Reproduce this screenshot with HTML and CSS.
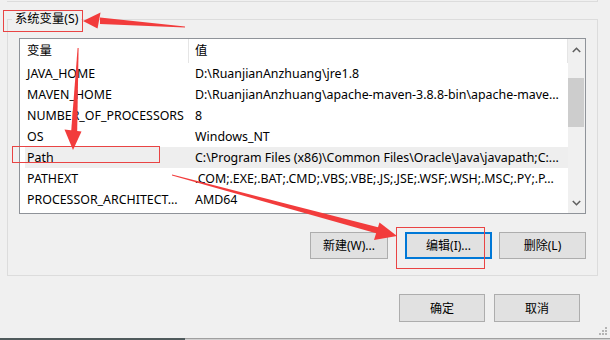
FILE: index.html
```html
<!DOCTYPE html>
<html lang="zh-CN">
<head>
<meta charset="utf-8">
<title>系统变量</title>
<link rel="stylesheet" href="styles.css">
</head>
<body>
<div class="page">
  <div class="prev"></div>
  <div class="group">
    <span class="legend">系统变量(S)</span>
    <div class="list">
      <div class="list-main">
        <div class="head">
          <div class="hc c1">变量</div>
          <div class="hc c2">值</div>
        </div>
        <div class="row"><span class="c1">JAVA_HOME</span><span class="c2">D:\RuanjianAnzhuang\jre1.8</span></div>
        <div class="row"><span class="c1">MAVEN_HOME</span><span class="c2">D:\RuanjianAnzhuang\apache-maven-3.8.8-bin\apache-mave...</span></div>
        <div class="row"><span class="c1">NUMBER_OF_PROCESSORS</span><span class="c2">8</span></div>
        <div class="row"><span class="c1">OS</span><span class="c2">Windows_NT</span></div>
        <div class="row sel"><span class="c1">Path</span><span class="c2">C:\Program Files (x86)\Common Files\Oracle\Java\javapath;C:...</span></div>
        <div class="row"><span class="c1">PATHEXT</span><span class="c2">.COM;.EXE;.BAT;.CMD;.VBS;.VBE;.JS;.JSE;.WSF;.WSH;.MSC;.PY;.P...</span></div>
        <div class="row"><span class="c1">PROCESSOR_ARCHITECT...</span><span class="c2">AMD64</span></div>
      </div>
      <div class="scroll">
        <div class="sb-btn">
          <svg width="9" height="6" viewBox="0 0 9 6"><path d="M0.8 5 L4.5 1.3 L8.2 5" fill="none" stroke="#606060" stroke-width="1.6"/></svg>
        </div>
        <div class="sb-track"><div class="sb-thumb"></div></div>
        <div class="sb-btn">
          <svg width="9" height="6" viewBox="0 0 9 6"><path d="M0.8 1 L4.5 4.7 L8.2 1" fill="none" stroke="#606060" stroke-width="1.6"/></svg>
        </div>
      </div>
    </div>
    <div class="btns">
      <button class="btn w78">新建(W)...</button>
      <button class="btn focus gap17">编辑(I)...</button>
      <button class="btn gap7">删除(L)</button>
    </div>
  </div>
  <div class="footer">
    <button class="btn tall">确定</button>
    <button class="btn tall">取消</button>
  </div>
  <div class="strip"><div class="strip-dark"></div><div class="strip-light"></div></div>

  <svg class="grip" width="9" height="9" viewBox="0 0 9 9">
    <rect x="6" y="0" width="2" height="2" fill="#b4b4b4"/>
    <rect x="3" y="3" width="2" height="2" fill="#b4b4b4"/>
    <rect x="6" y="3" width="2" height="2" fill="#b4b4b4"/>
    <rect x="0" y="6" width="2" height="2" fill="#b4b4b4"/>
    <rect x="3" y="6" width="2" height="2" fill="#b4b4b4"/>
    <rect x="6" y="6" width="2" height="2" fill="#b4b4b4"/>
  </svg>

  <svg class="marks" width="610" height="340" viewBox="0 0 610 340">
    <g fill="none" stroke="#e94444" stroke-width="1">
      <rect x="3.5" y="10.5" width="79" height="21"/>
      <rect x="12.5" y="146.5" width="147" height="16"/>
      <rect x="396.5" y="227.5" width="88" height="41"/>
    </g>
    <g fill="#f23c3c">
      <polygon points="100,17.5 100,24 185,27.6 185,26.6"/>
      <polygon points="83,21 100.5,12.5 97.5,28.5"/>
      <polygon points="77.6,48 78.6,48 77.2,131 71.2,131"/>
      <polygon points="64.5,129.5 81.5,131.5 73,150"/>
      <polygon points="172,174.6 172,175.6 377,233.6 379,227.4"/>
      <polygon points="397,236 379.5,222.5 374,240"/>
    </g>
  </svg>
</div>
</body>
</html>
```
FILE: styles.css
```css
* { box-sizing: border-box; }
html, body { margin: 0; padding: 0; }
body {
  background: #f0f0f0;
  font-family: "Noto Sans", "Noto Sans CJK SC", sans-serif;
  font-size: 12px;
  color: #000;
}
.page {
  position: relative;
  width: 610px;
  height: 340px;
  overflow: hidden;
  background: #f0f0f0;
  display: flex;
  flex-direction: column;
}
.prev {
  margin-left: 7px;
  width: 591px;
  height: 2px;
  border-right: 1px solid #dcdcdc;
  border-bottom: 1px solid #dcdcdc;
}
.group {
  position: relative;
  margin-top: 17px;
  margin-left: 7px;
  width: 591px;
  height: 257px;
  border: 1px solid #dcdcdc;
  padding: 18px 11px 0 11px;
}
.legend {
  position: absolute;
  left: 4px;
  top: -10px;
  padding: 0 3px;
  background: #f0f0f0;
  line-height: 18px;
  font-size: 12.3px;
}
.list {
  width: 567px;
  height: 176px;
  border: 1px solid #8f9399;
  background: #fff;
  display: flex;
  overflow: hidden;
}
.list-main {
  width: 548px;
  overflow: hidden;
  font-size: 12.4px;
}
.head {
  display: flex;
  height: 24px;
}
.hc {
  line-height: 24px;
  border-right: 1px solid #e5e5e5;
  white-space: nowrap;
}
.hc.c1 { width: 169px; padding-left: 7px; }
.hc.c2 { width: 379px; padding-left: 6px; }
.row {
  display: flex;
  height: 21px;
  line-height: 21px;
  margin-left: 5px;
  width: 543px;
  white-space: nowrap;
}
.row.sel { background: #eeeeee; }
.row .c1 {
  width: 163px;
  padding-left: 2px;
  padding-right: 2px;
  overflow: hidden;
  text-overflow: ellipsis;
}
.row .c2 {
  width: 380px;
  padding-left: 7px;
  padding-right: 2px;
  overflow: hidden;
  text-overflow: ellipsis;
}
.scroll {
  width: 17px;
  display: flex;
  flex-direction: column;
  background: #f0f0f0;
}
.sb-btn {
  height: 21px;
  display: flex;
  align-items: center;
  justify-content: center;
  flex: none;
}
.sb-track {
  flex: 1;
  padding-top: 18px;
}
.sb-thumb {
  width: 16px;
  height: 49px;
  background: #cdcdcd;
}
.btns {
  margin-top: 18px;
  display: flex;
  justify-content: flex-end;
}
.btn {
  font-family: "Noto Sans", "Noto Sans CJK SC", sans-serif;
  font-size: 12px;
  color: #000;
  width: 87px;
  height: 27px;
  background: #e1e1e1;
  border: 1px solid #adadad;
  padding: 0;
  margin: 0;
  line-height: 23px;
}
.btn.w78 { width: 78px; }
.btn.focus { border: 2px solid #0078d7; }
.btn.gap17 { margin-left: 17px; }
.btn.gap7 { margin-left: 7px; }
.footer {
  margin-top: 18px;
  display: flex;
  justify-content: flex-end;
  gap: 9px;
  padding-right: 30px;
}
.btn.tall { width: 86px; height: 28px; }
.strip {
  margin-top: auto;
  height: 2px;
  display: flex;
}
.strip-dark { width: 185px; background: #4f5a5c; }
.strip-light { flex: 1; background: #d0d0d0; border-top: 1px solid #a0a0a0; }
.grip {
  position: absolute;
  right: 2px;
  bottom: 4px;
}
.marks {
  position: absolute;
  left: 0;
  top: 0;
  pointer-events: none;
}
```
